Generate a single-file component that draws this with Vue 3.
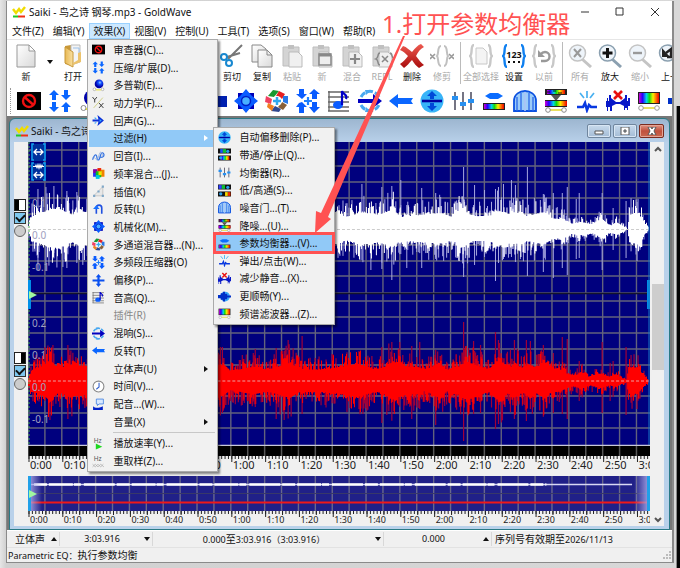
<script setup>
import { ref } from 'vue'

const menus = [
  ['文件(Z)'], ['编辑(Y)'], ['效果(X)', true], ['视图(V)'], ['控制(U)'],
  ['工具(T)'], ['选项(S)'], ['窗口(W)'], ['帮助(R)'],
].map(([label, open]) => ({ label, open: !!open }))

const effects = [
  { label: '审查器(C)...', icon: 'censor' },
  { label: '压缩/扩展(D)...', icon: 'compress' },
  { label: '多普勒(E)...', icon: 'doppler' },
  { label: '动力学(F)...', icon: 'dynamics' },
  { label: '回声(G)...', icon: 'echo' },
  { label: '过滤(H)', arrow: true, open: true },
  { label: '回音(I)...', icon: 'flange' },
  { label: '频率混合...(J)...', icon: 'blend' },
  { label: '插值(K)', icon: 'interp' },
  { label: '反转(L)', icon: 'invert' },
  { label: '机械化(M)...', icon: 'gear' },
  { label: '多通道混音器...(N)...', icon: 'wheel' },
  { label: '多频段压缩器(O)', icon: 'multi' },
  { label: '偏移(P)...', icon: 'offset' },
  { label: '音高(Q)...', icon: 'pitch' },
  { label: '插件(R)', disabled: true },
  { label: '混响(S)...', icon: 'reverb' },
  { label: '反转(T)', icon: 'reverse' },
  { label: '立体声(U)', arrow: true },
  { label: '时间(V)...', icon: 'clock' },
  { label: '配音...(W)...', icon: 'voice' },
  { label: '音量(X)', arrow: true },
  { separator: true },
  { label: '播放速率(Y)...', icon: 'rate' },
  { label: '重取样(Z)...', icon: 'resample' },
]

const filters = [
  { label: '自动偏移删除(P)...', icon: 'autoffset' },
  { label: '带通/停止(Q)...', icon: 'bandpass' },
  { label: '均衡器(R)...', icon: 'sliders' },
  { label: '低/高通(S)...', icon: 'lowhigh' },
  { label: '噪音门...(T)...', icon: 'gate' },
  { label: '降噪...(U)...', icon: 'denoise' },
  { label: '参数均衡器...(V)...', icon: 'parameq', current: true },
  { label: '弹出/点击(W)...', icon: 'click' },
  { label: '减少静音...(X)...', icon: 'silence' },
  { label: '更顺畅(Y)...', icon: 'smooth' },
  { label: '频谱滤波器...(Z)...', icon: 'spectrum' },
]

const fileTools = [
  { label: '新', icon: 'doc' },
  { drop: true },
  { label: '打开', icon: 'folder' },
]
const editTools = [
  { label: '剪切', icon: 'scissors' },
  { label: '复制', icon: 'copy' },
  { label: '粘贴', icon: 'paste', off: true },
  { label: '新', icon: 'pastenew', off: true },
  { label: '混合', icon: 'mix', off: true },
  { label: 'REPL', icon: 'repl', off: true },
  { label: '删除', icon: 'delete' },
  { label: '修剪', icon: 'trim', off: true },
  { bar: true },
  { label: '全部选择', icon: 'selall', off: true, wide: true },
  { label: '设置', icon: 'set' },
  { label: '以前', icon: 'prev', off: true },
  { bar: true },
  { label: '所有', icon: 'zall', off: true },
  { label: '放大', icon: 'zin' },
  { label: '缩小', icon: 'zout', off: true },
  { label: '上一', icon: 'zback' },
]
const fxLeft = ['censor', 'compress', 'doppler']
const fxRight = ['interpblock', 'gear', 'wheel', 'multi', 'pitch', 'reverb', 'reverse', 'autoffset',
  'sliders', 'parameq', 'gate', 'denoise', 'click', 'silence', 'spectrum', 'smooth']

const total = 184
const labels = Array.from({ length: 19 }, (_, i) => `${Math.floor(i / 6)}:${i % 6}0`)

const gridX = Array.from({ length: 37 }, (_, i) => (i * 5 * 624) / total)
const gridV = gridX.map(x => `M${x.toFixed(2)} 0V304`).join('')
const gridY = [8, 24, 40, 56, 72, 103, 119, 134, 151, 159, 175, 191, 207, 223, 254, 271, 286]
const gridH = gridY.map(y => `M0 ${y}H624`).join('')
const overV = gridX.map(x => `M${x.toFixed(2)} 0V35`).join('')
const ticksMinor = Array.from({ length: total }, (_, i) => `M${((i * 624) / total + 1).toFixed(2)} 0V3`).join('')
const ticksMajor = gridX.map((x, i) => `M${(x + 1).toFixed(2)} 0V${i % 2 ? 4 : 6}`).join('')
const bandTicks = gridX.map(x => `M${x.toFixed(2)} 0V10`).join('')

function rng(seed) {
  let s = seed
  return () => {
    s = (s * 1664525 + 1013904223) % 4294967296
    return s / 4294967296
  }
}

function level(keys, x) {
  for (let i = 1; i < keys.length; i++) {
    const [x1, a1] = keys[i]
    const [x0, a0] = keys[i - 1]
    if (x <= x1) return a0 + ((a1 - a0) * (x - x0)) / (x1 - x0)
  }
  return 0
}

function wave(mid, keys, peaks, seed) {
  const r = rng(seed)
  let top = ''
  let bottom = ''
  let spikes = ''
  for (let x = 0; x < 624; x++) {
    const a = level(keys, x)
    const up = a * (0.75 + r() ** 3 * 0.75)
    const dn = a * (0.7 + r() ** 3 * 0.75)
    top += `L${x} ${(mid - up).toFixed(1)}H${x + 1}`
    bottom = `L${x + 1} ${(mid + dn).toFixed(1)}H${x}` + bottom
    if (r() < 0.26) spikes += `M${x} ${(mid - a * (1.1 + r() * 0.55)).toFixed(1)}V${mid}`
    if (r() < 0.26) spikes += `M${x} ${(mid + a * (1.1 + r() * 0.55)).toFixed(1)}V${mid}`
  }
  for (const [x, up, dn] of peaks) spikes += `M${x} ${mid - up}V${mid + dn}`
  return { body: `M0 ${mid}${top}L624 ${mid}${bottom}Z`, spikes }
}

const left = wave(87,
  [[0, 4], [4, 17], [14, 22], [24, 27], [32, 26], [44, 19], [52, 24], [60, 22], [180, 20], [300, 20], [310, 22], [318, 16],
    [335, 22], [352, 19], [365, 26], [374, 16], [395, 19], [415, 21], [425, 16], [436, 26], [446, 17], [462, 17], [472, 24],
    [482, 20], [496, 22], [500, 17], [517, 22], [526, 14], [537, 13], [545, 7], [556, 9], [566, 6], [576, 13], [584, 4],
    [590, 9], [598, 3], [601, 0], [603, 19], [612, 21], [618, 8], [623, 0]],
  [[10, 40, 41], [18, 42, 42], [26, 43, 24], [39, 38, 39], [49, 37, 34], [335, 45, 31], [344, 22, 41], [355, 42, 40],
    [365, 43, 51], [374, 49, 25], [380, 24, 39], [395, 41, 39], [409, 36, 30], [437, 62, 48], [448, 44, 36], [458, 39, 28],
    [469, 40, 52], [472, 42, 34], [477, 45, 30], [485, 49, 28], [489, 44, 33], [501, 62, 47], [517, 35, 43], [527, 36, 49],
    [536, 36, 39], [541, 42, 46], [550, 30, 30], [553, 36, 29], [576, 36, 41], [587, 21, 21], [600, 28, 29], [611, 27, 22]], 11)
const right = wave(239,
  [[0, 4], [4, 15], [14, 20], [22, 28], [30, 16], [40, 22], [56, 20], [195, 21], [203, 13], [225, 19], [240, 15], [262, 24],
    [272, 16], [290, 15], [305, 17], [330, 23], [348, 15], [356, 18], [366, 26], [378, 20], [392, 18], [398, 14], [412, 24],
    [420, 15], [432, 19], [440, 26], [452, 19], [462, 16], [472, 29], [482, 17], [488, 24], [496, 16], [502, 22], [510, 18],
    [518, 25], [524, 16], [534, 15], [540, 10], [549, 7], [554, 12], [562, 6], [575, 10], [584, 5], [590, 8], [597, 3],
    [600, 2], [602, 18], [611, 18], [617, 8], [623, 0]],
  [[17, 34, 20], [22, 26, 39], [25, 36, 25], [40, 36, 38], [195, 31, 32], [215, 26, 24], [228, 32, 26], [249, 33, 38],
    [257, 30, 39], [261, 41, 28], [275, 45, 33], [305, 27, 20], [320, 26, 31], [332, 30, 28], [355, 34, 42], [365, 39, 36],
    [373, 39, 24], [385, 35, 38], [393, 39, 28], [409, 31, 44], [437, 59, 60], [447, 40, 33], [454, 36, 32], [469, 49, 48],
    [472, 41, 43], [488, 41, 38], [500, 41, 40], [504, 40, 28], [517, 36, 35], [527, 28, 32], [536, 44, 33], [541, 42, 38],
    [553, 20, 20], [576, 39, 32], [584, 18, 20], [587, 20, 16], [600, 34, 34]], 29)

const on1 = ref(true)
const on2 = ref(true)
</script>

<template>
  <div class="desktop">
    <svg class="defs" aria-hidden="true">
      <defs>
        <linearGradient id="rainbow"><stop offset="0" stop-color="#d000d0" /><stop offset=".18" stop-color="#2000ff" /><stop offset=".38" stop-color="#00d8e8" /><stop offset=".52" stop-color="#10d810" /><stop offset=".7" stop-color="#f8f000" /><stop offset=".85" stop-color="#ff7000" /><stop offset="1" stop-color="#e80000" /></linearGradient>
        <linearGradient id="paper" x2="1" y2="1"><stop offset="0" stop-color="#fff" /><stop offset="1" stop-color="#d9d9d9" /></linearGradient>
        <linearGradient id="gold"><stop offset="0" stop-color="#e8b854" /><stop offset="1" stop-color="#f9e0a0" /></linearGradient>
        <linearGradient id="redx" x2="0" y2="1"><stop offset="0" stop-color="#ee5a50" /><stop offset="1" stop-color="#a80c0c" /></linearGradient>
        <radialGradient id="ball" cx=".6" cy=".35"><stop offset="0" stop-color="#9cc8ff" /><stop offset=".4" stop-color="#1050ff" /><stop offset="1" stop-color="#0000a8" /></radialGradient>
      </defs>
      <symbol id="logo" viewBox="0 0 14 12"><path d="M1 3l3 4 3-4 2 3 4-5" fill="none" stroke="#f0dc00" stroke-width="2.4" /><path d="M1 10.5h5" stroke="#20c820" stroke-width="2" /><path d="M6 10.5h7" stroke="#f03010" stroke-width="2" /></symbol>
      <symbol id="censor" viewBox="0 0 24 24"><path d="M0 3h24v18H0z" /><circle cx="12" cy="12" r="6" fill="none" stroke="#f01010" stroke-width="2.4" /><path d="M7.500 8l9 8" stroke="#f01010" stroke-width="2.4" /></symbol>
      <symbol id="compress" viewBox="0 0 24 24"><path fill="#0a66ff" d="M6 1l5 5H8v5H4V6H1zM18 11l-5-5h3V1h4v5h3zM6 23l-5-5h3v-5h4v5h3zM18 13l5 5h-3v5h-4v-5h-3z" /></symbol>
      <symbol id="doppler" viewBox="0 0 24 24"><circle cx="13" cy="9" r="8" fill="url(#ball)" /><path d="M2 19a2.500 2.500 0 1 0 5 0 2.500 2.500 0 1 0-5 0zM17 19a2.500 2.500 0 1 0 5 0 2.500 2.500 0 1 0-5 0z" fill="#fff" stroke="#888" /><path d="M7 20h10" stroke="#e8e030" stroke-width="2" /></symbol>
      <symbol id="dynamics" viewBox="0 0 24 24"><path d="M1 2l4 5 4-5M5 7v5M13 13l8 9M21 13l-8 9" fill="none" stroke="#333" stroke-width="1.800" /><path d="M3 22L20 3" stroke="#c8c870" stroke-width="1.500" /></symbol>
      <symbol id="echo" viewBox="0 0 24 24"><path fill="#0a30d8" d="M10 2l12 10-12 10 2-8H1v-4h11z" /><path fill="#38a8ff" d="M5 5l4 4H5zM5 19l4-4H5zM14 9l4 3-4 3z" /></symbol>
      <symbol id="flange" viewBox="0 0 24 24"><path d="M1 18c3-10 7-12 8-5s4 8 6-1 6-8 7-4-5 8-7 4" fill="none" stroke="#3070e0" stroke-width="2.200" /><path d="M1 14c3-4 5 4 8 4s4-14 7-14 4 6 2 10" fill="none" stroke="#88a8e0" stroke-width="1.500" /></symbol>
      <symbol id="blend" viewBox="0 0 24 24"><path fill="#8000a0" d="M2 4h8v8H2z" /><path fill="#2030ff" d="M2 11h7v7H2z" /><path fill="#f02000" d="M10 2h7v7h-7z" /><path fill="#f08000" d="M16 5h7v13h-7z" /><path fill="#10c020" d="M7 8h10v11H7z" /><path fill="#f8e000" d="M12 8h6v7h-6z" /><path fill="#00c8e0" d="M7 15h7v7H7z" /></symbol>
      <symbol id="interp" viewBox="0 0 24 24"><path d="M3 20L12 11 20 3v17z" fill="#e8e8e8" stroke="#aaa" /><path d="M2 18h4v4H2zM10 10h4v4h-4zM18 1h4v4h-4zM18 18h4v4h-4z" fill="#80a8c8" /></symbol>
      <symbol id="interpblock" viewBox="0 0 24 24"><path d="M4 7h20v11H4z" fill="#0020b0" /></symbol>
      <symbol id="invert" viewBox="0 0 24 24"><path d="M8 20V9a5 5 0 0 1 10 0v11" fill="none" stroke="#2050e0" stroke-width="3" /><path d="M2 11h12l-6-7z" fill="#1870ff" /></symbol>
      <symbol id="gear" viewBox="0 0 24 24"><path fill="#0000b8" d="M4 4h16v16H4z" /><path fill="#0a5cff" d="M12 0l5 6 1 1 6 5-6 5-1 1-5 6-5-6-1-1-6-5 6-5 1-1z" /><circle cx="12" cy="12" r="4.500" fill="#48b0ff" stroke="#0020c8" stroke-width="1.500" /></symbol>
      <symbol id="wheel" viewBox="0 0 24 24"><path fill="#189830" d="M8 1l6 1-5 6-6-1z" /><path fill="#e82020" d="M14 2l6 3-3 5-6-3z" /><path fill="#2878e8" d="M18 7h5v8l-5-2z" /><path fill="#886038" d="M17 13l5 3-4 5-5-3z" /><path fill="#304890" d="M10 17l6 3-2 3-8-1z" /><path fill="#f08020" d="M3 14l6 3-2 5-5-4z" /><path fill="#f04060" d="M1 7l6 3-1 5-6-2z" /><circle cx="12" cy="12" r="5" fill="#fff" /><path d="M12 8v8M8 12h8" stroke="#30a8f0" stroke-width="2.500" /></symbol>
      <symbol id="multi" viewBox="0 0 24 24"><path fill="#0a5cff" d="M3 0h5v5h3l-5 5-6-5h3zM18 0l6 5h-3v5h-5V5h-3zM3 14l3-1 5 5H8v6H3v-6H0zM16 13h5v5h3l-6 6-5-6h3z" /><path d="M12 8v8M8 12h8" stroke="#2080ff" stroke-width="2.200" /></symbol>
      <symbol id="offset" viewBox="0 0 24 24"><path fill="#0a50f0" d="M12 0l5 6h-3v4h9v4h-9v4h3l-5 6-5-6h3v-4H1v-4h9V6H7z" /></symbol>
      <symbol id="pitch" viewBox="0 0 24 24"><path d="M2 2v20M1 3h21M1 8h21M1 13h21M1 18h21M1 22h21" stroke="#666" stroke-width="1.300" /><ellipse cx="11" cy="16" rx="5" ry="4" fill="#0a5cff" /><path d="M15 16V2c1 4 6 3 4 8" fill="none" stroke="#0000c8" stroke-width="2.200" /></symbol>
      <symbol id="reverb" viewBox="0 0 24 24"><path d="M3 8a10 10 0 0 1 18 0M3 16a10 10 0 0 0 18 0" fill="none" stroke="#48a8f0" stroke-width="3" stroke-dasharray="6 2" /><path fill="#0000c0" d="M0 10h15V5l9 7-9 7v-5H0z" /><path fill="#48a8f0" d="M7 1h6L8 6zM7 23h6l-5-5z" /></symbol>
      <symbol id="reverse" viewBox="0 0 24 24"><path fill="#0a66ff" d="M0 12l9-7v4h15l-2 3 2 3H9v4z" /></symbol>
      <symbol id="clock" viewBox="0 0 24 24"><circle cx="12" cy="12" r="10" fill="#fff" stroke="#888" stroke-width="2" /><path d="M13 5v8l-5 4" fill="none" stroke="#3060d0" stroke-width="2" /></symbol>
      <symbol id="voice" viewBox="0 0 24 24"><path d="M8 2h13v9h-8l-3 3v-3H8z" fill="#d8e8ff" stroke="#4080e0" stroke-width="1.500" /><path d="M2 15c4 4 10 4 18 0v7H2z" fill="#0020c8" /></symbol>
      <symbol id="rate" viewBox="0 0 24 24"><text x="3" y="11" class="glyph">Hz</text><path d="M7 12l12 6-12 5z" fill="#20d820" /></symbol>
      <symbol id="resample" viewBox="0 0 24 24"><text x="3" y="11" class="glyph">Hz</text><path d="M1 22l5-5 5 5 5-5 6 5M1 17l5 5 5-5 5 5 5-5" fill="none" stroke="#aaa" stroke-width="1.300" /></symbol>
      <symbol id="autoffset" viewBox="0 0 24 24"><circle cx="12" cy="12" r="11.500" fill="#38b4f8" /><path d="M2 12h20" stroke="#0000a0" stroke-width="2.600" /><path d="M12 2l5 5h-3v3h-4V7H7zM12 22l5-5h-3v-3h-4v3H7z" fill="#0048d8" /></symbol>
      <symbol id="bandpass" viewBox="0 0 24 24"><path fill="#111" d="M0 1h24v9H0zM0 14h24v9H0z" /><path fill="#2050ff" d="M4 2h5v7H4z" /><path fill="#10c030" d="M9 2h6v7H9z" /><path fill="url(#rainbow)" d="M5 15h16v7H5z" /><circle cx="18" cy="6" r="3" fill="#28a0f0" /><circle cx="5" cy="18" r="3" fill="#28a0f0" /></symbol>
      <symbol id="sliders" viewBox="0 0 24 24"><path d="M4 3v18M12 3v18M20 3v18" stroke="#667" stroke-width="1.800" /><path d="M1 7h6v4H1zM9 13h6v4H9zM17 10h6v4h-6z" fill="#2890f0" /></symbol>
      <symbol id="lowhigh" viewBox="0 0 24 24"><path fill="#111" d="M0 1h24v9H0zM0 14h24v9H0z" /><path fill="#3040ff" d="M1 2h6v7H1z" /><path fill="#10c030" d="M7 2h6v7H7z" /><path fill="#f03000" d="M18 15h5v7h-5z" /><path fill="#f8d800" d="M13 15h5v7h-5z" /><circle cx="18" cy="6" r="3" fill="#28a0f0" /><circle cx="5" cy="18" r="3" fill="#28a0f0" /></symbol>
      <symbol id="gate" viewBox="0 0 24 24"><path d="M1 22V12C1 5 7 2 12 2s11 3 11 10v10z" fill="#9cccf8" stroke="#0a50e0" stroke-width="1.800" /><path d="M12 2v20M4 8v14M8 4v18M16 4v18M20 8v14" stroke="#2868e8" stroke-width="1.300" /><path d="M12 3v19" stroke="#fff" /></symbol>
      <symbol id="denoise" viewBox="0 0 24 24"><path fill="#222" d="M1 0h22v6H1z" /><path fill="url(#rainbow)" d="M3 1h18v4H3z" /><path d="M3 3h3M9 2h3M14 4h4" stroke="#111" /><path d="M7 6h10l-5 6z" fill="#555" /><path fill="#222" d="M1 11h22v7H1z" /><path fill="url(#rainbow)" d="M1 12h22v5H1z" /><path d="M6 21h12" stroke="#e8e060" stroke-width="2" /><circle cx="4" cy="21" r="2.300" fill="#fff" stroke="#888" /><circle cx="20" cy="21" r="2.300" fill="#fff" stroke="#888" /></symbol>
      <symbol id="parameq" viewBox="0 0 24 24"><path fill="#0a6cff" d="M3 7l5-3h8l5 3-5 3H8z" /><path fill="#222" d="M1 14h22v7H1z" /><path fill="url(#rainbow)" d="M2 15h20v5H2z" /></symbol>
      <symbol id="click" viewBox="0 0 24 24"><path d="M12 2v7M5 4l4 5M19 4l-4 5" stroke="#48b0f0" stroke-width="1.700" /><path d="M2 18h6l2-4 2 7 2-5 2 2h6" fill="none" stroke="#0838e0" stroke-width="2.600" /></symbol>
      <symbol id="silence" viewBox="0 0 24 24"><path d="M0 12h1V9h1v3h1V6h2v3l5 4h4l5-4V6h2v6h1V9h2v8h-2v4h-1v-2h-2v2h-1v-4l-4-2h-4l-4 2v5H4v-4H2v4H1v-4H0z" fill="#0818c8" /><path d="M8 2l8 8M16 2l-8 8" stroke="#e81010" stroke-width="2.600" /></symbol>
      <symbol id="smooth" viewBox="0 0 24 24"><circle cx="13" cy="12" r="9" fill="#38a8f8" /><path d="M0 9h5V6h4v12H5v-3H0zM9 3h4v18H9zM13 7h4v3h7v4h-7v3h-4z" fill="#0030c8" /></symbol>
      <symbol id="spectrum" viewBox="0 0 24 24"><path fill="#222" d="M1 3h22v12H1z" /><path fill="url(#rainbow)" d="M2 4h20v10H2z" /><path d="M6 19h12" stroke="#e8e060" stroke-width="2" /><circle cx="4" cy="19" r="2.300" fill="#fff" stroke="#999" /><circle cx="20" cy="19" r="2.300" fill="#fff" stroke="#999" /></symbol>

      <symbol id="doc" viewBox="0 0 24 24"><path d="M3 1h12l6 6v16H3z" fill="url(#paper)" stroke="#999" /><path d="M15 1v6h6z" fill="#fff" stroke="#999" /></symbol>
      <symbol id="folder" viewBox="0 0 24 24"><path d="M4 2l6-1v20l-6-1z" fill="#c89838" /><path d="M10 1h9v17l-9 3z" fill="#f4f4f4" stroke="#bbb" /><path d="M12 4h6v12" fill="none" stroke="#9bc0e8" /><path d="M4 3l8 5v15l-8-4z" fill="url(#gold)" stroke="#c89838" /><path d="M12 21l8-3V8l-3 1v7l-5 3z" fill="#ecc36c" /></symbol>
      <symbol id="scissors" viewBox="0 0 24 24"><path d="M22 1L8 15M20 9L7 13" stroke="#777" stroke-width="2" /><circle cx="4" cy="13" r="3" fill="none" stroke="#1888d0" stroke-width="2" /><circle cx="9" cy="19" r="3" fill="none" stroke="#1888d0" stroke-width="2" /></symbol>
      <symbol id="copy" viewBox="0 0 24 24"><path d="M2 1h9l5 4v13H2z" fill="url(#paper)" stroke="#888" /><path d="M8 6h9l5 5v12H8z" fill="url(#paper)" stroke="#888" /><path d="M17 6v5h5" fill="none" stroke="#888" /></symbol>
      <symbol id="clip" viewBox="0 0 24 24"><path d="M3 3h16v19H3z" fill="#d4d4d4" stroke="#bdbdbd" /><path d="M8 1h6v4H8z" fill="#c0c0c0" /><path d="M9 8h9l4 4v11H9z" fill="#f0f0f0" stroke="#bbb" /></symbol>
      <symbol id="paste" viewBox="0 0 24 24"><use href="#clip" /></symbol>
      <symbol id="pastenew" viewBox="0 0 24 24"><use href="#clip" /><path d="M9 10h12v11H9z" fill="#eee" stroke="#888" stroke-width="1.500" /><path d="M9 11h12" stroke="#888" stroke-width="3" /></symbol>
      <symbol id="mix" viewBox="0 0 24 24"><use href="#clip" /><path d="M15 10v10M10 15h10" stroke="#888" stroke-width="2.200" /></symbol>
      <symbol id="repl" viewBox="0 0 24 24"><use href="#clip" /><path d="M10 9c-3 0-1 5-4 6 3 1 1 6 4 6M20 9c3 0 1 5 4 6-3 1-1 6-4 6M12 12l6 6M18 12l-6 6" fill="none" stroke="#888" stroke-width="1.500" /></symbol>
      <symbol id="delete" viewBox="0 0 24 24"><path d="M3 2c4 1 6 4 9 6 3-4 6-7 9-8l3 3c-4 2-6 5-8 9 3 4 5 7 8 9l-5 3c-3-2-5-5-7-8-3 3-5 6-8 8l-4-4c4-3 6-5 8-8-3-3-5-5-8-6z" fill="url(#redx)" /></symbol>
      <symbol id="trim" viewBox="0 0 24 24"><path d="M0 10l5 5M5 10l-5 5M19 10l5 5M24 10l-5 5" stroke="#999" stroke-width="1.600" /><path d="M11 2c-4 0-2 8-4 10 2 2 0 10 4 10M14 2c4 0 2 8 4 10-2 2 0 10-4 10" fill="none" stroke="#c0c0c0" stroke-width="2" /></symbol>
      <symbol id="braces" viewBox="0 0 24 24"><path d="M5 1C1 1 4 10 1 12c3 2 0 11 4 11M19 1c4 0 1 9 4 11-3 2 0 11-4 11" fill="none" stroke="currentColor" stroke-width="2.400" /></symbol>
      <symbol id="selall" viewBox="0 0 24 24"><use href="#braces" color="#c8c8c8" /><path d="M7 4h7l4 4v12H7z" fill="#f4f4f4" stroke="#c8c8c8" /></symbol>
      <symbol id="set" viewBox="0 0 24 24"><use href="#braces" color="#1080f0" /><text x="12" y="14" class="digits">123</text><path d="M6 18h2M11 18h2M16 18h2" stroke="#111" stroke-width="2" /></symbol>
      <symbol id="prev" viewBox="0 0 24 24"><use href="#braces" color="#c8c8c8" /><path d="M9 17h4a4 4 0 0 0 0-9c-3 0-4 2-6 4" fill="none" stroke="#999" stroke-width="2.400" /><path d="M6 6v7h7z" fill="#999" /></symbol>
      <symbol id="lens" viewBox="0 0 24 24"><path d="M14 15l9 8" stroke="currentColor" stroke-width="3" /><circle cx="9.500" cy="9" r="8" fill="#eef4fa" stroke="currentColor" stroke-width="1.500" /></symbol>
      <symbol id="zall" viewBox="0 0 24 24"><use href="#lens" color="#c4c4c4" /><path d="M6 5l7 8M13 5l-7 8" stroke="#999" stroke-width="2" /></symbol>
      <symbol id="zin" viewBox="0 0 24 24"><use href="#lens" color="#8ba0b0" /><path d="M9.500 4v10M4.500 9h10" stroke="#111" stroke-width="3" /></symbol>
      <symbol id="zout" viewBox="0 0 24 24"><use href="#lens" color="#c4c4c4" /><path d="M5 9h9" stroke="#999" stroke-width="2.400" /></symbol>
      <symbol id="zback" viewBox="0 0 24 24"><use href="#lens" color="#8ba0b0" /><path d="M9 13h4V5L8 9" fill="none" stroke="#222" stroke-width="2.400" /><path d="M4 4v9h8z" fill="#222" /></symbol>
    </svg>

    <main class="app">
      <header class="titlebar">
        <svg class="logo"><use href="#logo" /></svg>
        <h1>Saiki - 鸟之诗 钢琴.mp3 - GoldWave</h1>
        <div class="caption">
          <button aria-label="最小化"><svg viewBox="0 0 10 10"><path d="M1 5h8" /></svg></button>
          <button aria-label="最大化"><svg viewBox="0 0 10 10"><path d="M1 1h7v7H1z" /></svg></button>
          <button aria-label="关闭"><svg viewBox="0 0 10 10"><path d="M1 1l8 8M9 1L1 9" /></svg></button>
        </div>
      </header>

      <nav class="menubar">
        <div v-for="m in menus" :key="m.label" class="menu">
          <button :class="{ open: m.open }">{{ m.label }}</button>
          <ul v-if="m.open" class="popup effects">
            <li v-for="(e, i) in effects" :key="i" :class="{ sep: e.separator }">
              <template v-if="!e.separator">
                <button class="entry" :class="{ open: e.open }" :disabled="e.disabled">
                  <svg class="mi"><use v-if="e.icon" :href="'#' + e.icon" /></svg>
                  <span>{{ e.label }}</span>
                  <i v-if="e.arrow" class="more"></i>
                </button>
                <ul v-if="e.open" class="popup filters">
                  <li v-for="f in filters" :key="f.label">
                    <button class="entry" :class="{ current: f.current }">
                      <svg class="mi"><use :href="'#' + f.icon" /></svg>
                      <span>{{ f.label }}</span>
                    </button>
                  </li>
                </ul>
              </template>
            </li>
          </ul>
        </div>
      </nav>

      <div class="tools">
        <div class="group file">
          <template v-for="(t, i) in fileTools" :key="i">
            <button v-if="t.drop" class="drop" aria-label="新建选项"><i class="down"></i></button>
            <button v-else class="tool"><svg><use :href="'#' + t.icon" /></svg><span>{{ t.label }}</span></button>
          </template>
        </div>
        <div class="group edit">
          <template v-for="(t, i) in editTools" :key="i">
            <i v-if="t.bar" class="bar"></i>
            <button v-else class="tool" :class="{ wide: t.wide }" :disabled="t.off"><svg><use :href="'#' + t.icon" /></svg><span>{{ t.label }}</span></button>
          </template>
        </div>
      </div>

      <div class="fx">
        <i class="grip"></i>
        <div class="group"><button v-for="n in fxLeft" :key="n" :aria-label="n"><svg><use :href="'#' + n" /></svg></button></div>
        <div class="group right"><button v-for="n in fxRight" :key="n" :aria-label="n"><svg><use :href="'#' + n" /></svg></button></div>
      </div>

      <div class="mdi">
        <section class="child">
          <header class="childbar">
            <svg class="logo"><use href="#logo" /></svg>
            <h2>Saiki - 鸟之诗</h2>
            <div class="childbtns">
              <button aria-label="最小化"><svg viewBox="0 0 12 8"><path d="M2 4h8v3H2z" /></svg></button>
              <button aria-label="还原"><svg viewBox="0 0 12 8"><path d="M2 0h8v8H2zM5 3v2h2V3z" fill-rule="evenodd" /></svg></button>
              <button class="x" aria-label="关闭"><svg viewBox="0 0 12 8"><path d="M2 0h3l1 2 1-2h3L8 4l2 4H7L6 6 5 8H2l2-4z" /></svg></button>
            </div>
          </header>
          <div class="childbody">
            <div class="channels">
              <div class="channel">
                <i class="pan"></i>
                <input v-model="on1" type="checkbox" aria-label="左声道">
                <input type="radio" name="solo" aria-label="左声道独奏">
              </div>
              <div class="channel alt">
                <i class="pan"></i>
                <input v-model="on2" type="checkbox" aria-label="右声道">
                <input type="radio" name="solo" aria-label="右声道独奏">
              </div>
            </div>

            <div class="display">
              <div class="wave">
                <svg class="plot" viewBox="0 0 624 304" preserveAspectRatio="none">
                  <path d="M0 0h624v304H0z" fill="#00007e" />
                  <path :d="gridV + gridH" stroke="#62627c" fill="none" stroke-width="1.400" />
                  <path :d="left.spikes" stroke="#a8a8e0" fill="none" />
                  <path :d="left.body" fill="#fff" />
                  <path :d="right.spikes" stroke="#a00038" fill="none" stroke-width="1.200" />
                  <path :d="right.body" fill="#f00" />
                  <path d="M0 151.500H624" stroke="#15152c" stroke-width="1.500" />
                  <path d="M0 87.500H624" stroke="#ccc" stroke-dasharray="3 2" />
                  <path d="M0 239H624" stroke="#f0a0a0" stroke-dasharray="3 2" />
                  <path d="M1 0V304" stroke="#50b050" stroke-dasharray="2 2" />
                  <path d="M0 138h3v29H0zM621 138h3v29h-3z" fill="#0090e8" />
                  <path d="M623 0V304" stroke="#1878c8" stroke-width="1" />
                  <path d="M0 303.500H624" stroke="#c8c8d8" stroke-width="1.500" />
                  <path d="M1 149l8 4-8 4z" fill="#a0f8a0" />
                </svg>
                <svg class="fit" viewBox="0 0 18 38">
                  <path d="M1 1h15v17H1zM1 20h15v17H1z" fill="#00309c" />
                  <path d="M4 1H2v16h2M13 1h2v16h-2M4 20H2v17h2M13 20h2v17h-2" fill="none" stroke="#10a0f0" stroke-width="1.500" />
                  <path d="M4 9h9M7 6L4 9l3 3M10 6l3 3-3 3M4 32h9M7 29l-3 3 3 3M10 29l3 3-3 3" fill="none" stroke="#fff" stroke-width="1.300" />
                  <path d="M3 23h2l1-2 1 2 1-3 1 3 1-3 1 3 1-2 1 2h1v1h-2l-1 2-1-2-1 3-1-3-1 2-1-2H3z" fill="#fff" />
                </svg>
                <div class="amps">
                  <ol><li>0.1</li><li>0.0</li><li>-0.1</li></ol>
                  <ol><li>0.2</li><li>0.1</li><li>0.0</li><li>-0.1</li></ol>
                </div>
              </div>
              <svg class="band" viewBox="0 0 624 10" preserveAspectRatio="none"><path d="M0 0h624v10H0z" /><path :d="bandTicks" stroke="#555" stroke-width="1.500" /></svg>
              <svg class="ticks" viewBox="0 0 624 6" preserveAspectRatio="none"><path :d="ticksMinor + ticksMajor" stroke="#222" /></svg>
              <ol class="ruler"><li v-for="l in labels" :key="l">{{ l }}</li></ol>
              <svg class="over" viewBox="0 0 624 35" preserveAspectRatio="none">
                <defs>
                  <linearGradient id="glow"><stop offset="0" stop-color="#a8a8e8" /><stop offset="1" stop-color="#a8a8e8" stop-opacity="0" /></linearGradient>
                  <linearGradient id="glowr"><stop offset="0" stop-color="#a8a8e8" stop-opacity="0" /><stop offset="1" stop-color="#a8a8e8" /></linearGradient>
                </defs>
                <path d="M0 0h624v35H0z" fill="#202088" />
                <path :d="overV" stroke="#68688c" stroke-width="1.400" />
                <path d="M0 17.500H624" stroke="#383868" />
                <path d="M0 8.500H606" stroke="#d8d8f4" stroke-width="1.500" />
                <path d="M6 8.500H520" stroke="#fff" stroke-width="2.400" stroke-dasharray="13 2 24 1 7 3 31 2" />
                <path d="M0 26.500H622" stroke="#f01818" stroke-width="1.800" />
                <path d="M0 0h14v35H0z" fill="url(#glow)" />
                <path d="M608 0h16v35h-16z" fill="url(#glowr)" />
                <path d="M0 0h3v35H0zM621 0h3v35h-3z" fill="#20a0e8" />
                <path d="M1 14l8 4-8 4z" fill="#a0f8a0" />
              </svg>
              <svg class="ticks" viewBox="0 0 624 6" preserveAspectRatio="none"><path :d="ticksMinor + ticksMajor" stroke="#222" /></svg>
              <ol class="ruler small"><li v-for="l in labels" :key="l">{{ l }}</li></ol>
            </div>

            <div class="scroll">
              <button aria-label="向上滚动"><svg viewBox="0 0 8 6"><path d="M1 5l3-3 3 3" /></svg></button>
              <div class="track"><i class="thumb"></i></div>
              <button aria-label="向下滚动"><svg viewBox="0 0 8 6"><path d="M1 1l3 3 3-3" /></svg></button>
            </div>
          </div>
        </section>
      </div>

      <footer class="status">
        <button class="mode"><b>立体声</b><i class="up"></i></button>
        <button class="len"><span>3:03.916</span><i class="down"></i></button>
        <button class="sel"><span>0.000<b>至</b>3:03.916（3:03.916）</span><i class="down"></i></button>
        <button class="pos"><span>0.000</span><i class="up"></i></button>
        <p><b>序列号有效期至</b>2026/11/13</p>
      </footer>
      <footer class="hint">
        <p>Parametric EQ：<b>执行参数均衡</b></p>
        <svg viewBox="0 0 8 8"><path d="M6 0h2v2H6zM3 3h2v2H3zM6 3h2v2H6zM0 6h2v2H0zM3 6h2v2H3zM6 6h2v2H6z" /></svg>
      </footer>
    </main>

    <aside class="note">
      <p>1.打开参数均衡器</p>
      <svg viewBox="0 0 92 198"><path d="M89 0h2L14 181l3 2L1 197l1-22 5 2z" /></svg>
    </aside>
    <i class="behind"></i>
  </div>
</template>

<style>
body { margin: 0; overflow-x: hidden; }
</style>

<style scoped>
.desktop {
  position: relative;
  box-sizing: border-box;
  min-height: 100vh;
  padding: 1px 6px 6px;
  overflow: hidden;
  background: linear-gradient(90deg, #e6e6e6, #d0d0d0 6px, #d8d8d8);
  font: 10px/14px "Noto Sans", "Noto Sans CJK SC", sans-serif;
  color: #111;
}
.desktop * { box-sizing: border-box; }
.defs { position: absolute; width: 0; height: 0; }
.glyph { font-size: 12px; fill: #555; }
.digits { font-size: 9px; font-weight: 700; fill: #111; text-anchor: middle; }
button {
  margin: 0; padding: 0; border: 0; background: none;
  font: inherit; color: inherit; white-space: nowrap;
}
ul, ol { margin: 0; padding: 0; list-style: none; }
h1, h2, p { margin: 0; font: inherit; white-space: nowrap; }
b { font-weight: 400; }
svg { display: block; flex: none; }
.app { background: #fff; border: solid #8a8a8a; border-width: 0 2px 1px 1px; }

.titlebar { display: flex; align-items: center; height: 22px; padding-left: 5px; }
.logo { width: 14px; height: 12px; }
h1 { margin-left: 3px; }
.caption { display: flex; margin-left: auto; }
.caption button { display: flex; justify-content: center; width: 35px; }
.caption svg { width: 10px; height: 10px; }
.caption path { fill: none; stroke: #333; }

.menubar { display: flex; height: 16px; padding-left: 1px; }
.menu { position: relative; }
.menu > button { display: block; height: 16px; padding: 0 5px 0 4px; line-height: 16px; }
.menu > button.open { background: #cce8ff; box-shadow: inset 0 0 0 1px #99d1ff; }

.popup {
  position: absolute; z-index: 5; display: grid;
  background: #f1f1f1; border: 1px solid #aaa;
  box-shadow: 2px 2px 2px rgb(0 0 0 / 45%);
}
.effects { top: 16px; left: -2px; width: 131px; height: 433px; padding: 1px; grid-template-rows: repeat(22, 1fr) 4px repeat(2, 1fr); }
.filters { top: -3px; left: 124px; width: 122px; height: 198px; padding: 1px; grid-auto-rows: 1fr; }
.popup li { position: relative; display: grid; min-height: 0; }
.sep { margin: 1px 1px 0 24px; border-top: 1px solid #c8c8c8; }
.entry { display: flex; align-items: center; min-height: 0; padding: 0 8px 0 3px; line-height: 14px; }
.entry span { margin-left: 8px; }
.entry:disabled { color: #888; }
.entry.open { background: #91c9f7; }
.entry.current { background: #91c9f7; outline: 3px solid #ff5252; outline-offset: -1px; }
.mi { width: 13px; height: 13px; }
.more { margin-left: auto; border: solid transparent; border-width: 3px 0 3px 4px; border-left-color: #111; }
.open .more { border-left-color: #fff; }

.tools { display: flex; height: 46px; border-top: 1px solid #e6e6e6; overflow: hidden; }
.group { display: flex; flex: none; align-items: center; }
.tools .file { padding-left: 4px; }
.tools .edit { margin-left: 129px; }
.tool { display: flex; flex: none; flex-direction: column; align-items: center; width: 30px; padding-top: 1px; font-size: 9px; line-height: 12px; }
.tool.wide { width: 36px; }
.tool svg { width: 24px; height: 24px; margin-bottom: 3px; }
.tool:disabled { color: #aaa; }
.drop { width: 17px; padding-bottom: 6px; }
.down, .up { display: inline-block; flex: none; border: solid transparent; }
.down { border-width: 4px 3px 0; border-top-color: #111; }
.up { border-width: 0 3px 4px; border-bottom-color: #111; }
.bar { width: 1px; height: 42px; margin: 0 2px 0 3px; background: #bbb; }

.fx { display: flex; align-items: center; height: 31px; overflow: hidden; }
.grip { width: 2px; height: 26px; margin-left: 3px; border-left: 1px dotted #999; }
.fx .group { gap: 7px; padding-left: 6px; }
.fx .right { padding-left: 100px; }
.fx .group svg { width: 24px; height: 24px; }

.mdi { padding: 2px 2px 0; background: #777; }
.child { border: 1px solid #2a7a86; border-radius: 6px 6px 0 0; background: linear-gradient(#9db6d0, #b9d1ea 24px); padding: 0 5px 3px 4px; }
.childbar { display: flex; align-items: center; height: 23px; padding-left: 1px; }
h2 { margin-left: 2px; }
.childbtns { display: flex; gap: 2px; margin-left: auto; }
.childbtns button { display: grid; place-items: center; width: 24px; height: 14px; border: 1px solid #70869e; border-radius: 2px; background: linear-gradient(#c8daec, #a4bcd6); box-shadow: inset 0 0 0 1px #d8e6f4; }
.childbtns .x { width: 25px; border-color: #7a2c20; background: linear-gradient(#e09484, #c0503c 50%, #c86850); box-shadow: inset 0 0 0 1px #e4a494; }
.childbtns svg { width: 12px; height: 8px; }
.childbtns path { fill: #fff; stroke: #555; }
.childbody { display: flex; background: #f0f0f0; }
.channels { flex: none; width: 14px; padding-top: 57px; }
.channel { display: grid; gap: 1px; width: 12px; }
.channel.alt { margin-top: 115px; }
.pan { height: 12px; border: 1px solid #222; background: linear-gradient(90deg, #000 40%, #fff 40%); }
.alt .pan { background: linear-gradient(90deg, #fff 60%, #000 60%); }
.channel input { appearance: none; width: 12px; height: 12px; margin: 0; border: 1px solid #333; background: #ccc; }
.channel input[type="checkbox"] { display: grid; place-items: center; background: #7ec8f0; }
.channel input[type="checkbox"]:checked::before { content: ""; width: 7px; height: 4px; margin-bottom: 2px; border: solid #111; border-width: 0 0 2px 2px; transform: rotate(-45deg); }
.channel input[type="radio"] { border-radius: 50%; border-color: #666; }

.display { flex: 1; min-width: 0; }
.wave { position: relative; }
.plot { width: 100%; height: 304px; }
.fit { position: absolute; top: 1px; left: 2px; width: 18px; height: 38px; }
.amps { position: absolute; top: 45px; left: 4px; display: grid; gap: 24px; color: #a0a0c0; line-height: 32px; }
.band { width: 100%; height: 10px; }
.ticks { width: 100%; height: 6px; margin-bottom: -6px; }
.ruler { display: grid; grid-template-columns: repeat(18, 10fr) 4fr; height: 20px; font-size: 11px; line-height: 17px; color: #222; }
.ruler li { min-width: 0; padding-left: 2px; overflow: hidden; white-space: nowrap; }
.over { width: 100%; height: 35px; }
.ruler.small { height: 15px; font-size: 9px; line-height: 17px; }

.scroll { display: flex; flex: none; flex-direction: column; width: 14px; padding-left: 2px; }
.scroll button { display: grid; place-items: center; height: 13px; }
.scroll svg { width: 8px; height: 6px; }
.scroll path { fill: none; stroke: #555; stroke-width: 2; }
.track { display: grid; flex: 1; grid-template-rows: 36fr 24fr 40fr; }
.thumb { grid-row: 2; background: #cdcdcd; }

.status { display: flex; align-items: center; height: 17px; padding-left: 6px; background: #f0f0f0; border-top: 1px solid #fff; font-size: 9px; }
.status b, .hint b { font-size: 10px; }
.status button { display: flex; flex: none; align-items: center; height: 14px; padding-right: 2px; border-right: 1px solid #d8d8d8; }
.status span { flex: 1; text-align: center; }
.mode { gap: 6px; width: 47px; }
.len { width: 93px; }
.sel { width: 231px; }
.pos { width: 108px; }
.mode b { padding-left: 2px; }
.status p { padding-left: 3px; }
.hint { display: flex; align-items: center; justify-content: space-between; height: 15px; padding: 0 1px; background: #f0f0f0; font-size: 9px; border-top: 1px solid #e2e2e2; }
.hint svg { width: 8px; height: 8px; fill: #bbb; }

.note { position: absolute; z-index: 9; top: 8px; left: 382px; color: #ff5252; pointer-events: none; }
.note p { font-size: 24px; line-height: 32px; }
.note svg { position: absolute; top: 28px; left: -68px; width: 92px; height: 198px; fill: #ff5252; }
.behind { position: absolute; top: 106px; right: 0; bottom: 0; width: 4px; background: #050505; border-left: 1px solid #888; }
</style>
